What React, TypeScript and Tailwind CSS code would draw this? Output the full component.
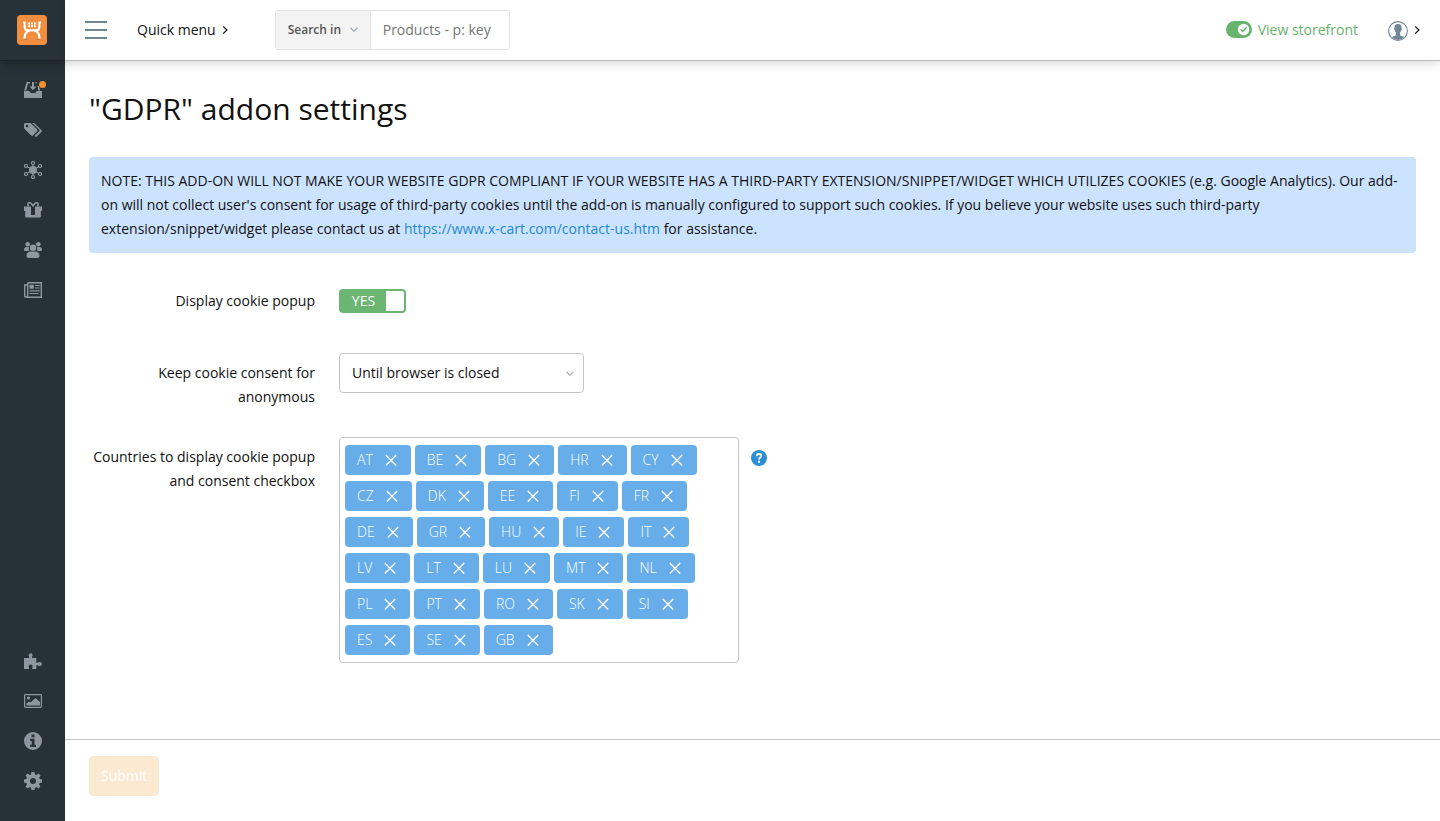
import { useState, type ReactNode } from "react";

const COUNTRIES = [
  "AT", "BE", "BG", "HR", "CY", "CZ", "DK", "EE", "FI", "FR", "DE", "GR", "HU", "IE",
  "IT", "LV", "LT", "LU", "MT", "NL", "PL", "PT", "RO", "SK", "SI", "ES", "SE", "GB",
];

function Glyph({ children }: { children: ReactNode }) {
  return (
    <svg viewBox="0 0 18 18" className="h-[18px] w-[18px]" fill="currentColor" aria-hidden="true">
      {children}
    </svg>
  );
}

const OrdersIcon = () => (
  <Glyph>
    <path d="M0 10h5.500l1.200 2h4.600l1.200-2H18v7H0z" />
    <path d="M2.700 1H6v1.500H4L2.200 9.500H.2z" />
    <path d="M8 1h2v4.500h2.500L9 9.200 5.500 5.500H8z" />
    <path d="M11.500 1h1.200v1.500h-1.200zM13.600 5h1.300l1.300 4.500h-2z" />
  </Glyph>
);

const CatalogIcon = () => (
  <Glyph>
    <path fillRule="evenodd" d="M0 3.500Q0 2 1.500 2h4.200q.8 0 1.400.6l6 6q.8.800 0 1.600L8.900 14.500q-.8.800-1.600 0L.6 8Q0 7.400 0 6.600zM3 3.700a1.300 1.300 0 1 0 0 2.600 1.300 1.300 0 0 0 0-2.600z" />
    <path d="M8.200 2h1.300q.7 0 1.300.6l6.700 6.600q.8.800 0 1.600l-4.600 4.600q-.8.800-1.700 0l-.6-.6 4.600-4.500q.8-.9 0-1.700z" />
  </Glyph>
);

const ChannelsIcon = () => (
  <Glyph>
    <circle cx="9" cy="9" r="4" />
    <g fill="none" stroke="currentColor" strokeWidth="1.200">
      <circle cx="9" cy="2" r="1.500" />
      <circle cx="9" cy="16" r="1.500" />
      <circle cx="2" cy="5" r="1.500" />
      <circle cx="16" cy="5" r="1.500" />
      <circle cx="2" cy="13" r="1.500" />
      <circle cx="16" cy="13" r="1.500" />
      <path d="M9 3.500v2M9 12.500v2M3.400 5.800 6 7.200M14.600 5.800 12 7.200M3.400 12.200 6 10.800M14.600 12.200 12 10.800" />
    </g>
  </Glyph>
);

const GiftIcon = () => (
  <Glyph>
    <path d="M0 5.500h7V16H2q-.8 0-.8-.8V10H0zM18 5.500h-7V16h5q.8 0 .8-.8V10H18z" />
    <path d="M1.500 14h15v2q0 .5-.8.500H2.300q-.8 0-.8-.5z" />
    <path fill="none" stroke="currentColor" strokeWidth="1.500" d="M9 5.300C8 2.700 6.500 1.500 5 1.800 3.500 2.200 3.300 4.300 4.800 5M9 5.300c1-2.600 2.500-3.800 4-3.500 1.500.4 1.700 2.500.2 3.200" />
  </Glyph>
);

const UsersIcon = () => (
  <Glyph>
    <circle cx="3.700" cy="3.300" r="2.300" />
    <circle cx="14.300" cy="3.300" r="2.300" />
    <path d="M0 9q0-3 2.500-3h2.300v4H1Q0 10 0 9zM18 9q0-3-2.500-3h-2.300v4H17q1 0 1-1z" />
    <circle cx="9" cy="6.800" r="3.300" />
    <path d="M2.500 15q0-4.500 4-4.500h5q4 0 4 4.500 0 2-1.800 2H4.300q-1.800 0-1.800-2z" />
  </Glyph>
);

const ContentIcon = () => (
  <Glyph>
    <path fill="none" stroke="currentColor" strokeWidth="1.400" d="M3.700 1.700h13.600v14.600H2.500Q.7 16.300.7 14.500V4h3M3.700 1.700V14q0 1.800-1.200 2" />
    <path d="M5.500 3.700h4.300v4H5.500zM11 4h4.800v1.100H11zM11 6.500h4.800v1.100H11zM5.500 9.300h10.300v1.100H5.500zM5.500 12h9v1.100h-9z" />
  </Glyph>
);

const AddonsIcon = () => (
  <Glyph>
    <path d="M0 6h4.500q1.100 0 .7-1.200-.6-.8-.6-1.600a2 2 0 0 1 4 0q0 .8-.6 1.600Q7.600 6 8.700 6h3.600v4.100q0 1 1 .6.900-.7 2.600-.7a2 2 0 0 1 0 4q-1.700 0-2.600-.7-1-.4-1 .6V17H8.700q-1 0-.6-1.100.5-.7.500-1.500a2 2 0 0 0-4 0q0 .8.500 1.500.4 1.100-.6 1.100H0z" />
  </Glyph>
);

const ImageIcon = () => (
  <Glyph>
    <rect x=".6" y="2.600" width="16.800" height="12.800" rx=".8" fill="none" stroke="currentColor" strokeWidth="1.200" />
    <circle cx="4.500" cy="6" r="1.600" />
    <path d="M2.500 13.500v-2L5 9.500l1.500 1L11.500 6l4.500 4v3.500z" />
  </Glyph>
);

const InfoIcon = () => (
  <Glyph>
    <path fillRule="evenodd" d="M9 0a9 9 0 1 0 0 18A9 9 0 0 0 9 0zM7.500 2.500h3v2.700h-3zM6.200 6.800h4.300v6h1.500V15H6.200v-2.200h1.500V9H6.200z" />
  </Glyph>
);

const SettingsIcon = () => (
  <Glyph>
    <path fillRule="evenodd" d="M7.500 0h3l.5 2.400 1.400.6 2.100-1.400 2 2L15.200 5.700l.6 1.400 2.200.4v3l-2.300.5-.6 1.400 1.300 2-2 2.100-2-1.400-1.400.6-.5 2.300h-3L7 15.700l-1.400-.6-2 1.400-2.100-2.100 1.400-2L2.300 11 0 10.500v-3L2.300 7l.6-1.400-1.400-2 2.100-2L5.600 3 7 2.400zM9 6a3 3 0 1 0 0 6 3 3 0 0 0 0-6z" />
  </Glyph>
);

const TOP_NAV = [
  { label: "Orders", Icon: OrdersIcon, dot: true },
  { label: "Catalog", Icon: CatalogIcon },
  { label: "Sales channels", Icon: ChannelsIcon },
  { label: "Discounts", Icon: GiftIcon },
  { label: "Users", Icon: UsersIcon },
  { label: "Content", Icon: ContentIcon },
];

const BOTTOM_NAV = [
  { label: "My addons", Icon: AddonsIcon },
  { label: "Look and feel", Icon: ImageIcon },
  { label: "Help", Icon: InfoIcon },
  { label: "Store setup", Icon: SettingsIcon },
];

function NavList({ items }: { items: { label: string; Icon: () => ReactNode; dot?: boolean }[] }) {
  return (
    <ul>
      {items.map(({ label, Icon, dot }) => (
        <li key={label}>
          <a href="#" aria-label={label} className="flex h-10 items-center justify-center pl-px text-[#8e979f] hover:text-white">
            <span className="relative">
              <Icon />
              {dot && <span className="absolute top-0 -right-1 h-[7px] w-[7px] rounded-full bg-[#f4912f]" />}
            </span>
          </a>
        </li>
      ))}
    </ul>
  );
}

function Logo() {
  return (
    <svg viewBox="0 0 30 30" className="h-[30px] w-[30px]" aria-hidden="true">
      <rect width="30" height="30" rx="4" fill="#f18d3e" />
      <g fill="none" stroke="#fff" strokeWidth="2.200">
        <path d="M6 7.500h1.700v4.500q0 3.400 3.300 3.400h8q3.300 0 3.300-3.400V7.500H24" />
        <path d="M7.700 24.500V22q0-3 1.800-4.600L12 15.400M22.300 24.500V22q0-3-1.800-4.600L18 15.400" />
      </g>
      <path fill="#fff" d="M11 7.500h2v2h-2zM14 7.500h2v2h-2zM17 7.500h2v2h-2zM11 10.300h2v2h-2zM14 10.300h2v2h-2zM17 10.300h2v2h-2z" />
      <path fill="#b5602d" d="M6.500 23.700h3.300v1.100H6.500zM20.200 23.700h3.300v1.100h-3.300z" />
    </svg>
  );
}

function ChevronDown({ className }: { className: string }) {
  return (
    <svg viewBox="0 0 8 6" className={className} fill="none" stroke="currentColor" strokeWidth="1.200" aria-hidden="true">
      <path d="M.7 1 4 4.500 7.300 1" />
    </svg>
  );
}

function ChevronRight() {
  return (
    <svg viewBox="0 0 6 8" className="h-2 w-1.5" fill="none" stroke="currentColor" strokeWidth="1.200" aria-hidden="true">
      <path d="M1.200.4 4.900 4 1.200 7.600" />
    </svg>
  );
}

function Header() {
  return (
    <header className="relative flex h-[61px] items-center border-b border-[#b9b9b9] bg-white px-5 shadow-[0_2px_10px_rgba(0,0,0,0.16)]">
      <button type="button" aria-label="Toggle menu" className="flex h-[18px] w-[22px] flex-col justify-between">
        <span className="h-0.5 w-full bg-[#728796]" />
        <span className="h-0.5 w-full bg-[#728796]" />
        <span className="h-0.5 w-full bg-[#728796]" />
      </button>
      <button type="button" className="ml-[30px] flex items-center gap-1.5">
        Quick menu
        <ChevronRight />
      </button>
      <form className="ml-[47px] flex h-10 w-[235px] overflow-hidden rounded-[3px] border border-[#e3e3e3]">
        <button type="button" className="flex w-[95px] shrink-0 items-center justify-between border-r border-[#e3e3e3] bg-[#f3f3f3] px-3 text-xs font-semibold text-[#555]">
          Search in
          <ChevronDown className="h-1.5 w-2 text-[#9aa5b4]" />
        </button>
        <input
          aria-label="Search"
          placeholder="Products - p: key"
          className="min-w-0 flex-1 px-3 outline-none placeholder:text-[#757575]"
        />
      </form>
      <div className="ml-auto flex items-center">
        <a href="#" className="flex items-center gap-1.5 text-[#66b36c]">
          <svg viewBox="0 0 26 18" className="h-[18px] w-[26px]" aria-hidden="true">
            <rect width="26" height="17" rx="8.500" fill="#66b36c" />
            <circle cx="17.500" cy="8.500" r="5.700" fill="#fff" />
            <path d="M14.500 8.300l2.200 2.200 4-4.300" fill="none" stroke="#66b36c" strokeWidth="1.300" />
          </svg>
          View storefront
        </a>
        <button type="button" aria-label="Account" className="ml-[30px] flex items-center gap-1.5">
          <svg viewBox="0 0 20 20" className="mt-0.5 h-5 w-5" aria-hidden="true">
            <circle cx="10" cy="10" r="9.400" fill="#fff" stroke="#728796" strokeWidth="1.100" />
            <path fill="#728796" d="M10 3c2.700 0 3.700 1.600 3.600 4q.5.600.1 1.600-.2.700-.6.900-.3 1.600-1 2.300v2q0 .8 1.300 1.200 2 .6 2.700 1.300Q13.500 19 10 19t-6.100-2.700q.7-.7 2.700-1.300 1.300-.4 1.300-1.200v-2q-.7-.7-1-2.300-.4-.2-.6-.9-.4-1 .1-1.600C6.300 4.600 7.300 3 10 3z" />
          </svg>
          <ChevronRight />
        </button>
      </div>
    </header>
  );
}

function Field({ label, htmlFor, children }: { label: string; htmlFor: string; children: ReactNode }) {
  return (
    <div className="flex min-h-[52px] items-start gap-6">
      <label htmlFor={htmlFor} className="w-[226px] shrink-0 py-2 text-right leading-6">
        {label}
      </label>
      {children}
    </div>
  );
}

export default function App() {
  const [enabled, setEnabled] = useState(true);
  const [countries, setCountries] = useState(COUNTRIES);

  return (
    <div className="flex min-h-screen bg-white font-['Open_Sans',sans-serif] text-sm text-[#111]">
      <aside className="flex w-[65px] shrink-0 flex-col bg-[#263238]">
        <a href="#" aria-label="Home" className="mb-[9px] flex h-[61px] items-center justify-center border-b border-[#1b2428] pr-px shadow-[0_2px_10px_rgba(0,0,0,0.3)]">
          <Logo />
        </a>
        <nav aria-label="Main" className="flex flex-1 flex-col justify-between pb-5">
          <NavList items={TOP_NAV} />
          <NavList items={BOTTOM_NAV} />
        </nav>
      </aside>

      <div className="flex min-w-0 flex-1 flex-col">
        <Header />
        <main className="flex-1 px-6 py-6">
          <h1 className="text-3xl leading-12">"GDPR" addon settings</h1>
          <p className="mt-6 rounded-[4px] bg-[#cce3ff] p-3 leading-6">
            NOTE: THIS ADD-ON WILL NOT MAKE YOUR WEBSITE GDPR COMPLIANT IF YOUR WEBSITE HAS A THIRD-PARTY
            EXTENSION/SNIPPET/WIDGET WHICH UTILIZES COOKIES (e.g. Google Analytics). Our add-on will not collect
            user's consent for usage of third-party cookies until the add-on is manually configured to support such
            cookies. If you believe your website uses such third-party extension/snippet/widget please contact us at{" "}
            <a href="#" className="text-[#2489d3]">https://www.x-cart.com/contact-us.htm</a> for assistance.
          </p>

          <form className="mt-7 flex flex-col gap-5">
            <Field label="Display cookie popup" htmlFor="popup">
              <label className="relative mt-2 flex h-6 w-[67px] cursor-pointer rounded-[4px] bg-[#6bb673] p-0.5">
                <input
                  id="popup"
                  type="checkbox"
                  checked={enabled}
                  onChange={(e) => setEnabled(e.target.checked)}
                  className="sr-only"
                />
                <span className="flex-1 text-center leading-5 font-medium text-white">{enabled ? "YES" : "NO"}</span>
                <span className="w-[18px] rounded-r-[2px] bg-white" />
              </label>
            </Field>

            <Field label="Keep cookie consent for anonymous" htmlFor="consent">
              <div className="relative w-[245px]">
                <select id="consent" className="h-10 w-full appearance-none rounded-[4px] border border-[#c4c4c4] bg-white px-3">
                  <option>Until browser is closed</option>
                </select>
                <ChevronDown className="pointer-events-none absolute top-[18px] right-2.5 h-1.5 w-2 text-[#aaaebd]" />
              </div>
            </Field>

            <Field label="Countries to display cookie popup and consent checkbox" htmlFor="country-AT">
              <div className="flex items-start gap-3">
                <ul className="flex w-[400px] flex-wrap gap-x-1 gap-y-1.5 rounded-[4px] border border-[#c4c4c4] px-[5px] py-[7px]">
                  {countries.map((code) => (
                    <li key={code} className="flex h-[30px] items-center gap-3 rounded-[4px] bg-[#67ade9] pr-3.5 pl-3 font-light text-white">
                      {code}
                      <button
                        id={"country-" + code}
                        type="button"
                        aria-label={"Remove " + code}
                        onClick={() => setCountries(countries.filter((c) => c !== code))}
                      >
                        <svg viewBox="0 0 12 12" className="h-3 w-3" stroke="currentColor" strokeWidth="1.400" aria-hidden="true">
                          <path d="M.8 1l10.400 10.400M11.200 1 .8 11.400" />
                        </svg>
                      </button>
                    </li>
                  ))}
                </ul>
                <button type="button" aria-label="Help" className="mt-[13px]">
                  <svg viewBox="0 0 16 16" className="h-4 w-4" aria-hidden="true">
                    <circle cx="8" cy="8" r="8" fill="#2d8fd5" />
                    <path d="M5.700 6.200q0-2.200 2.300-2.200t2.300 1.900q0 1-1.100 1.700T8 9.600" fill="none" stroke="#fff" strokeWidth="1.800" />
                    <path d="M7 10.700h2v2H7z" fill="#fff" />
                  </svg>
                </button>
              </div>
            </Field>
          </form>
        </main>
        <footer className="border-t border-[#c4c4c4] px-6 pt-4 pb-[25px]">
          <button type="submit" disabled className="h-10 rounded-[4px] bg-[#fce9d2] px-3 font-medium text-white">
            Submit
          </button>
        </footer>
      </div>
    </div>
  );
}
